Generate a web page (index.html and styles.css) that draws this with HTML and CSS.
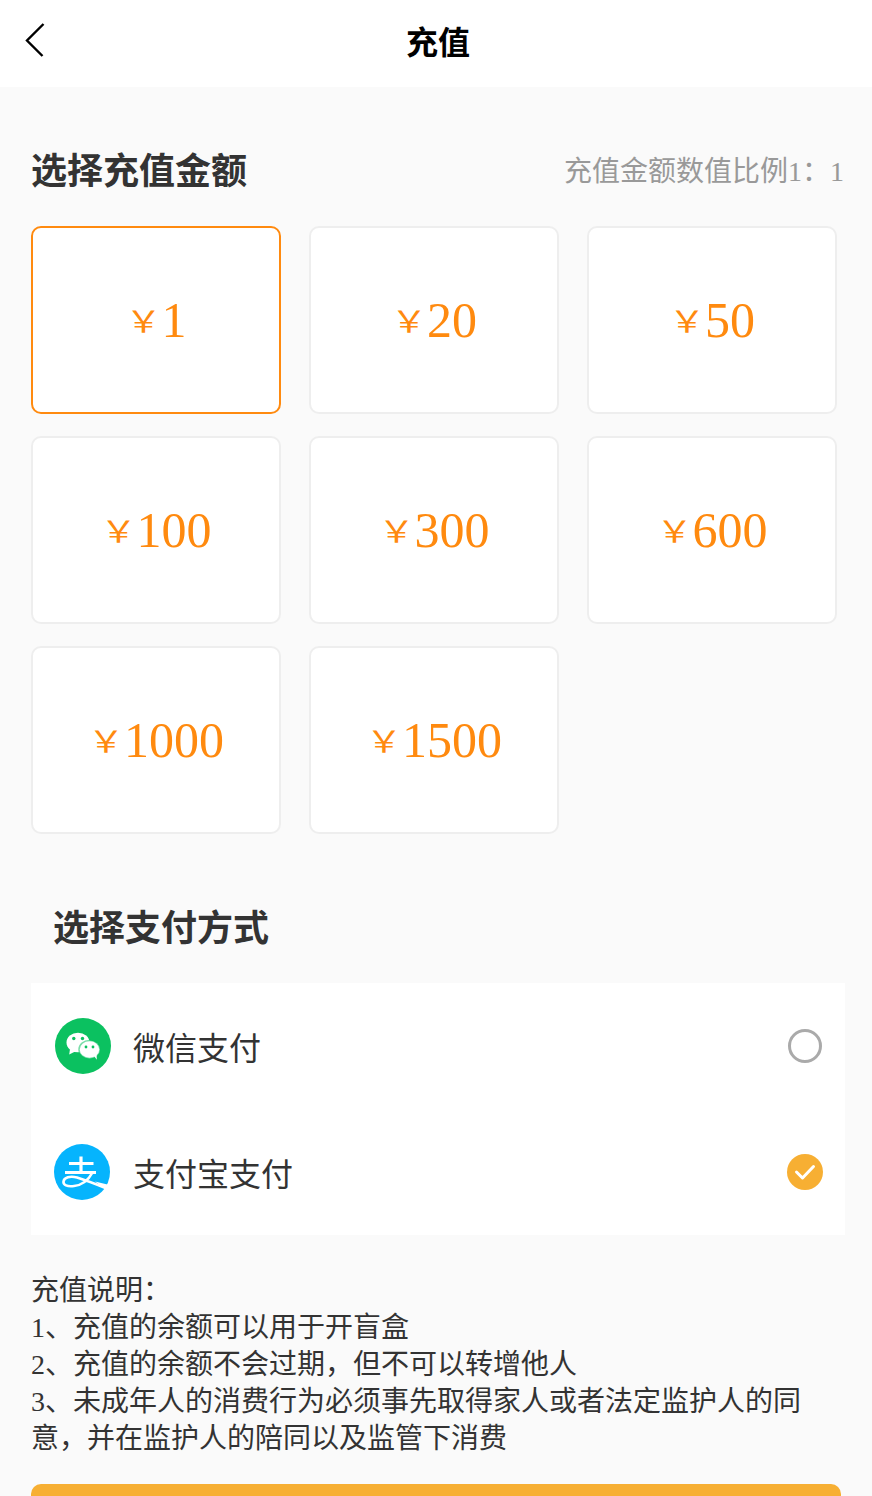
FILE: index.html
```html
<!DOCTYPE html>
<html lang="zh-CN">
<head>
  <meta charset="UTF-8" />
  <meta name="viewport" content="width=device-width, initial-scale=1" />
  <title>充值</title>
  <link rel="stylesheet" href="styles.css">
</head>
<body>

  <header class="topbar">
    <svg class="back" width="22" height="36" viewBox="0 0 22 36" fill="none" stroke="#000" stroke-width="2.4"><path d="M19.500 2 3 18.500 18.500 34"/></svg>
    <h1 class="page-title">充值</h1>
  </header>

  <main class="content">
    <div class="amount-head">
      <h2 class="section-title">选择充值金额</h2>
      <span class="ratio">充值金额数值比例1：1</span>
    </div>

    <div class="amount-grid">
      <div class="amount active"><span class="yen">￥</span>1</div>
      <div class="amount"><span class="yen">￥</span>20</div>
      <div class="amount"><span class="yen">￥</span>50</div>
      <div class="amount"><span class="yen">￥</span>100</div>
      <div class="amount"><span class="yen">￥</span>300</div>
      <div class="amount"><span class="yen">￥</span>600</div>
      <div class="amount"><span class="yen">￥</span>1000</div>
      <div class="amount"><span class="yen">￥</span>1500</div>
    </div>

    <h2 class="section-title pay-title">选择支付方式</h2>

    <div class="pay-list">
      <div class="pay-row">
        <svg class="pay-icon" width="56" height="56" viewBox="0 0 56 56">
          <circle cx="28" cy="28" r="28" fill="#0bc160"/>
          <ellipse cx="23" cy="24.500" rx="11.500" ry="9.800" fill="#fff"/>
          <path d="M15 31l-.8 5.500 6-3z" fill="#fff"/>
          <circle cx="18.800" cy="20.500" r="1.700" fill="#0bc160"/>
          <circle cx="27.500" cy="20.500" r="1.700" fill="#0bc160"/>
          <ellipse cx="34.500" cy="31.500" rx="10.500" ry="9" fill="#fff" stroke="#0bc160" stroke-opacity=".55" stroke-width="1.500"/>
          <path d="M39 38l2.800 3.800-.2-5.500z" fill="#fff"/>
          <circle cx="31" cy="29" r="1.400" fill="#0bc160"/>
          <circle cx="38" cy="29" r="1.400" fill="#0bc160"/>
        </svg>
        <span class="pay-name">微信支付</span>
        <span class="radio"></span>
      </div>
      <div class="pay-row">
        <svg class="pay-icon ali" width="56" height="56" viewBox="0 0 56 56">
          <circle cx="28" cy="28" r="28" fill="#06b4fd"/>
          <path d="M15 19.500h24.500M27 12.500v16M11 28.500h31" fill="none" stroke="#fff" stroke-width="3.200"/>
          <path d="M38.500 28.500C35 35 29 41 20 42 13 42.800 9 41 9.500 37.500 10 33.500 16 31.500 23 33.500 33 36.500 44 41 54 45" fill="none" stroke="#fff" stroke-width="2.600"/>
          <path d="M41 37.500 55.500 41 53 46.500z" fill="#fff"/>
        </svg>
        <span class="pay-name">支付宝支付</span>
        <svg class="check" width="36" height="36" viewBox="0 0 36 36">
          <circle cx="18" cy="18" r="18" fill="#f7af33"/>
          <path d="M9.500 18 15.500 24 26.500 12.500" fill="none" stroke="#fff" stroke-width="3" stroke-linecap="round" stroke-linejoin="round"/>
        </svg>
      </div>
    </div>

    <div class="notes">
      <p>充值说明：</p>
      <p>1、充值的余额可以用于开盲盒</p>
      <p>2、充值的余额不会过期，但不可以转增他人</p>
      <p>3、未成年人的消费行为必须事先取得家人或者法定监护人的同意，并在监护人的陪同以及监管下消费</p>
    </div>

    <button type="button" class="pay-btn"></button>
  </main>

</body>
</html>
```

FILE: styles.css
```css
html, body {
  margin: 0;
  height: 1496px;
  overflow: hidden;
}
body {
  background-color: #fafafa;
  font-family: "Liberation Serif", "Noto Sans CJK SC", serif;
  color: #333;
}
h1, h2, p {
  margin: 0;
}
.topbar {
  height: 87px;
  background-color: #fff;
  display: flex;
  align-items: center;
  justify-content: center;
  position: relative;
}
.back {
  position: absolute;
  left: 24px;
  top: 22px;
}
.page-title {
  padding-left: 4px;
  font-size: 32px;
  line-height: 87px;
  color: #000;
  font-weight: bold;
}
.content {
  padding: 0 27px 0 31px;
}
.amount-head {
  display: flex;
  justify-content: space-between;
  align-items: center;
  height: 48px;
  padding-top: 61px;
  margin-bottom: 30px;
}
.section-title {
  font-size: 36px;
  line-height: 48px;
  font-weight: bold;
  color: #333;
}
.ratio {
  font-size: 28px;
  line-height: 44px;
  margin-right: 1px;
  color: #999;
}
.amount-grid {
  display: grid;
  grid-template-columns: repeat(3, 250px);
  grid-auto-rows: 188px;
  column-gap: 28px;
  row-gap: 22px;
}
.amount {
  box-sizing: border-box;
  background-color: #fff;
  border: 2px solid #eee;
  border-radius: 10px;
  text-align: center;
  color: #ff8a0f;
  font-size: 50px;
  line-height: 184px;
}
.amount.active {
  border-color: #ff8a0f;
}
.yen {
  display: inline-block;
  font-size: 36px;
  line-height: 1;
  vertical-align: 3px;
  transform: scaleY(.82);
}
.pay-title {
  margin: 71px 0 30px 22px;
}
.pay-list {
  width: 814px;
  background-color: #fff;
}
.pay-row {
  height: 126px;
  display: flex;
  align-items: center;
  padding: 0 22px 0 24px;
  box-sizing: border-box;
}
.pay-icon.ali {
  margin-left: -1px;
  margin-right: 1px;
}
.pay-name {
  flex: 1;
  margin-left: 22px;
  font-size: 32px;
  color: #333;
}
.radio {
  box-sizing: border-box;
  width: 34px;
  height: 34px;
  margin-right: 1px;
  border: 3px solid #aaa;
  border-radius: 50%;
}
.notes {
  margin-top: 37px;
  width: 782px;
  font-size: 28px;
  line-height: 37px;
  color: #333;
}
.pay-btn {
  display: block;
  width: 810px;
  height: 90px;
  margin-top: 27px;
  border: none;
  border-radius: 10px;
  background-color: #f7af33;
}
```
